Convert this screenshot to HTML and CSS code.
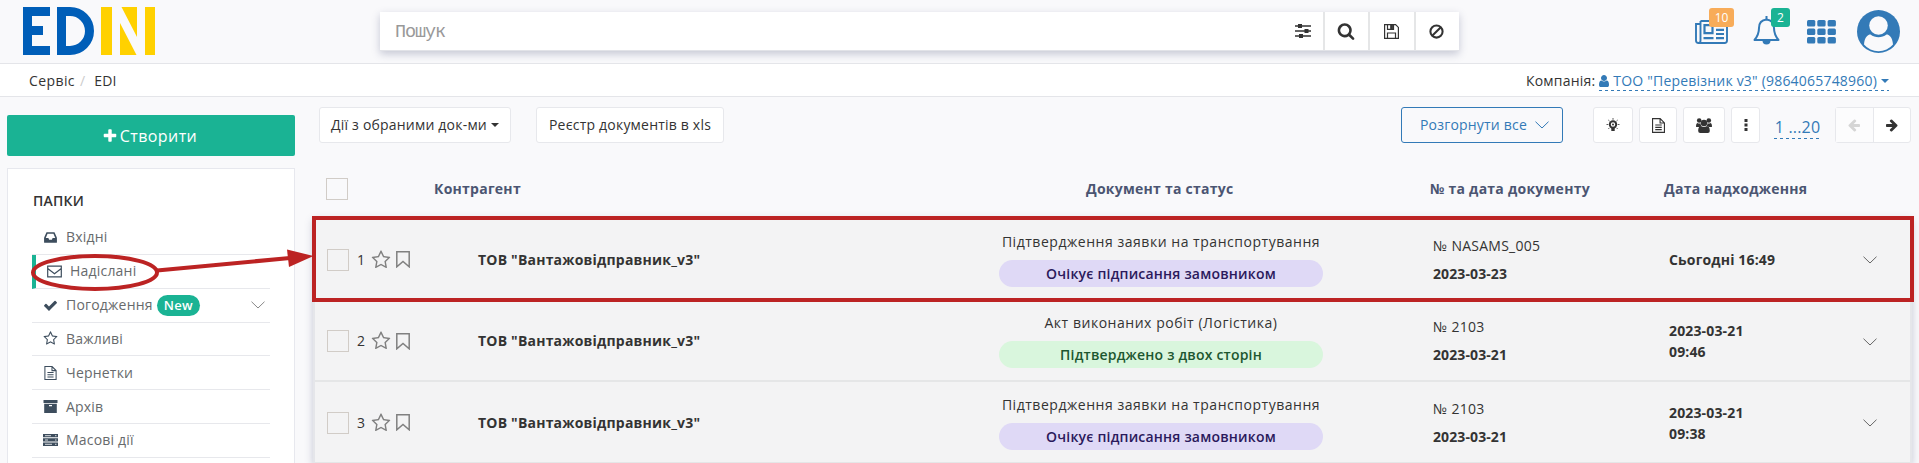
FILE: index.html
```html
<!DOCTYPE html>
<html lang="uk">
<head>
<meta charset="utf-8">
<title>EDIN</title>
<link rel="stylesheet" href="styles.css">
</head>
<body>
<svg class="defs" width="0" height="0">
  <symbol id="plus" viewBox="0 0 1792 1792"><path d="M1600 736v192q0 40-28 68t-68 28h-416v416q0 40-28 68t-68 28h-192q-40 0-68-28t-28-68v-416h-416q-40 0-68-28t-28-68v-192q0-40 28-68t68-28h416v-416q0-40 28-68t68-28h192q40 0 68 28t28 68v416h416q40 0 68 28t28 68z"/></symbol>
  <symbol id="star" viewBox="0 0 1792 1792"><path d="M1201 1004l306-297-422-62-189-382-189 382-422 62 306 297-73 421 378-199 377 199zm527-357q0 22-26 48l-363 354 86 500q1 7 1 20 0 50-41 50-19 0-40-12l-449-236-449 236q-22 12-40 12-21 0-31.500-14.500t-10.500-35.500q0-6 2-20l86-500-364-354q-25-27-25-48 0-37 56-46l502-73 225-455q19-41 49-41t49 41l225 455 502 73q56 9 56 46z"/></symbol>
  <symbol id="inbox" viewBox="0 0 1792 1792"><path d="M1151 960h316q-1-3-2.500-8t-2.500-8l-212-496h-708l-212 496q-1 2-2.500 8t-2.500 8h316l95 192h320zm513 30v482q0 26-19 45t-45 19h-1408q-26 0-45-19t-19-45v-482q0-62 25-123l238-552q10-25 36.500-42t52.500-17h832q26 0 52.500 17t36.500 42l238 552q25 61 25 123z"/></symbol>
  <symbol id="check" viewBox="0 0 1792 1792"><path d="M1671 566q0 40-28 68l-724 724-136 136q-28 28-68 28t-68-28l-136-136-362-362q-28-28-28-68t28-68l136-136q28-28 68-28t68 28l294 295 656-657q28-28 68-28t68 28l136 136q28 28 28 68z"/></symbol>
  <symbol id="search" viewBox="0 0 1792 1792"><path d="M1216 832q0-185-131.500-316.500t-316.500-131.500-316.500 131.500-131.500 316.500 131.500 316.500 316.500 131.500 316.500-131.500 131.500-316.500zm512 832q0 52-38 90t-90 38q-54 0-90-38l-343-342q-179 124-399 124-143 0-273.500-55.500t-225-150-150-225-55.500-273.500 55.500-273.500 150-225 225-150 273.500-55.500 273.500 55.500 225 150 150 225 55.500 273.500q0 220-124 399l343 343q37 37 37 90z"/></symbol>
  <symbol id="user" viewBox="0 0 1792 1792"><path d="M1536 1399q0 109-62.500 187t-150.500 78h-854q-88 0-150.500-78t-62.500-187q0-85 8.500-160.500t31.500-152 58.500-131 94-89 134.500-34.500q131 128 313 128t313-128q76 0 134.500 34.500t94 89 58.500 131 31.500 152 8.500 160.500zm-256-887q0 159-112.500 271.500t-271.500 112.500-271.500-112.500-112.500-271.500 112.500-271.500 271.500-112.500 271.500 112.500 112.500 271.500z"/></symbol>
  <symbol id="right" viewBox="0 0 1792 1792"><path d="M1600 960q0 54-37 91l-651 651q-39 37-91 37-51 0-90-37l-75-75q-38-38-38-91t38-91l293-293h-704q-52 0-84.500-37.500t-32.500-90.500v-128q0-53 32.500-90.500t84.500-37.500h704l-293-294q-38-36-38-90t38-90l75-75q38-38 90-38 53 0 91 38l651 651q37 35 37 90z"/></symbol>
  <symbol id="file" viewBox="0 0 14 16"><path class="line" d="M.6.6h8.200l4.600 4.600v10.200H.6zM8.700.8v4.500h4.600M3.500 7.500h7M3.500 10h7M3.500 12.500h7"/></symbol>
  <symbol id="chevron" viewBox="0 0 14 8"><path d="M.5.7L7 7 13.500.7" fill="none" stroke="currentColor"/></symbol>
  <symbol id="bookmark" viewBox="0 0 14 17"><path d="M.8.8h12.400v15L7 10.500.8 15.800z" fill="none" stroke="currentColor" stroke-width="1.500"/></symbol>
</svg>

<header class="top">
  <svg class="logo" width="132" height="48" viewBox="0 0 132 48">
    <g fill="#005eb8"><rect width="9" height="48"/><rect width="27" height="9"/><rect y="19" width="20" height="9"/><rect y="39" width="27" height="9"/></g>
    <path d="M38.500 4.500H47a19.500 19.500 0 0 1 0 39h-8.500z" fill="none" stroke="#005eb8" stroke-width="9"/>
    <g fill="#ffd100"><rect x="78" width="11" height="48"/><path d="M98.500 0H114v30zM97 16v32h16.500z"/><rect x="122" width="10" height="48"/></g>
  </svg>
  <div class="search">
    <div class="field"><span class="placeholder">Пошук</span>
      <svg width="16" height="14" viewBox="0 0 16 14"><path d="M0 2h16M0 7h16M0 12h16" stroke="#333" stroke-width="1.300"/><path d="M3 0h4v4H3zM9.500 5h4v4h-4zM4 10h4v4H4z"/></svg>
    </div>
    <div class="sbtn"><svg width="18" height="18"><use href="#search"/></svg></div>
    <div class="sbtn"><svg width="15" height="15" viewBox="0 0 15 15" fill="none" stroke="#333" stroke-width="1.200"><path d="M.6.6h11l2.800 2.800v11H.6zM3.500 14V9h8v5M3.500.8v4.500h6V.8"/><path d="M6.800 1h1.500v3.300H6.800z" fill="#333"/></svg></div>
    <div class="sbtn"><svg width="15" height="15" viewBox="0 0 16 16" fill="none" stroke="#333" stroke-width="2.200"><circle cx="8" cy="8" r="6.500"/><path d="M3.700 12.300l8.600-8.600"/></svg></div>
  </div>
  <div class="tools">
    <div class="news"><svg width="33" height="24" viewBox="0 0 33 24" fill="none" stroke="currentColor" stroke-width="1.900"><path d="M5.500 1h26.500v19.500q0 2.500-2.500 2.500h-26q-2.500 0-2.500-2.500V4h4.500M5.500 1v19.500q0 2.500-2 2.500"/><path d="M9.500 5.200h8v8h-8zM8.500 18.200h10M21 9.800h8M21 14h8M21 18.200h8" stroke-width="2.200"/></svg><span class="count orange">10</span></div>
    <div class="bell"><svg width="27" height="29" viewBox="0 0 27 29" fill="none" stroke="currentColor" stroke-width="2"><path d="M13.500 3.500C8 4 6 8 6 12c0 6-2 9-4.500 12h24C23 21 21 18 21 12c0-4-2-8-7.500-8.500z" stroke-linejoin="round"/><path d="M13.500 0v4"/><path d="M9.500 24.500a4 4 0 0 0 8 0z" fill="currentColor" stroke="none"/></svg><span class="count green">2</span></div>
    <svg class="apps" width="29" height="24" viewBox="0 0 29 24"><g id="r"><rect width="8.300" height="6.500" rx="1.500"/><rect x="10.300" width="8.300" height="6.500" rx="1.500"/><rect x="20.600" width="8.300" height="6.500" rx="1.500"/></g><use href="#r" y="8.500"/><use href="#r" y="17"/></svg>
    <svg class="avatar" width="43" height="43" viewBox="0 0 43 43"><circle cx="21.500" cy="21.500" r="21.500"/><circle cx="21.500" cy="15.500" r="9.300" fill="#f9f9fb"/><path d="M7 34.500C7.500 27 11 24.500 13.500 24.500c4.500 3.500 11.500 3.500 16 0 2.500 0 6 2.500 6.500 10a19 19 0 0 1-29 0z" fill="#f9f9fb"/></svg>
  </div>
</header>

<nav class="crumbs">
  <span>Сервіс</span><span class="slash">/</span><span>EDI</span>
  <div class="company"><span>Компанія:</span><a><svg width="14" height="14"><use href="#user"/></svg><span>ТОО "Перевізник v3" (9864065748960)</span><i class="caret"></i></a></div>
</nav>

<div class="body">
  <aside>
    <div class="create"><svg width="16" height="16"><use href="#plus"/></svg>Створити</div>
    <div class="panel">
      <h2>ПАПКИ</h2>
      <ul>
        <li><svg width="15" height="15"><use href="#inbox"/></svg>Вхідні</li>
        <li class="active"><svg width="15" height="13" viewBox="0 0 15 13"><path class="line" d="M.7 1.200h13.600v10.600H.7zM.7 3.500l6.800 5.200 6.800-5.200"/></svg>Надіслані</li>
        <li><svg width="15" height="15"><use href="#check"/></svg>Погодження<b class="new">New</b><svg class="chev" width="14" height="8"><use href="#chevron"/></svg></li>
        <li><svg width="15" height="15"><use href="#star"/></svg>Важливі</li>
        <li><svg width="15" height="14"><use href="#file"/></svg>Чернетки</li>
        <li><svg width="15" height="13" viewBox="0 0 15 13"><path d="M.5 0h14v3H.5zM1.200 3.800h12.600V13H1.200zM6 5v1.200h3V5z" fill-rule="evenodd"/></svg>Архів</li>
        <li><svg width="15" height="12" viewBox="0 0 15 12"><path d="M0 0h15v3.300H0zM0 4.300h15v3.300H0zM0 8.600h15V12H0z"/><path d="M2 1.700h6M2 6h3M2 10.300h7M12 1.700h1.500M12 6h1.500M12 10.300h1.500" stroke="#fff" stroke-width=".8"/></svg>Масові дії</li>
      </ul>
    </div>
  </aside>

  <main>
    <div class="toolbar">
      <div class="btn wide1">Дії з обраними док-ми<i class="caret"></i></div>
      <div class="btn wide2">Реєстр документів в xls</div>
      <div class="btn expand">Розгорнути все<svg width="14" height="8"><use href="#chevron"/></svg></div>
      <div class="btn b1"><svg width="14" height="14" viewBox="0 0 14 14"><circle cx="7" cy="6.500" r="3.200" fill="none" stroke="#333" stroke-width="2"/><circle cx="7" cy="6.500" r="1"/><path d="M5.300 10h3.400v3H5.300z"/><path d="M7 0v1.800M.5 6.500h1.800M11.700 6.500h1.800M2.300 2l1.300 1.200M11.700 2l-1.300 1.200M2.300 11l1.200-1.200M11.700 11l-1.200-1.200" stroke="#333" stroke-width=".8"/></svg></div>
      <div class="btn b2"><svg width="13" height="15"><use href="#file"/></svg></div>
      <div class="btn b3"><svg width="16" height="15" viewBox="0 0 16 15"><circle cx="3.200" cy="2.500" r="2.300"/><circle cx="12.800" cy="2.500" r="2.300"/><circle cx="8" cy="5" r="3.200"/><path d="M0 8.500C0 5.500 1 5 1.500 5q1.700 1 3 .3Q4.500 7 5.500 8 4 8 3.300 9H1Q0 9 0 8.500zM16 8.500c0-3-1-3.500-1.500-3.500q-1.700 1-3 .3 0 1.700-1 2.700 1.500 0 2.200 1H15q1 0 1-.5zM2.200 13c0-4 1.500-5 3-5q2.800 2 5.600 0c1.500 0 3 1 3 5q0 2-2 2H4.200q-2 0-2-2z"/></svg></div>
      <div class="btn b4"><svg width="4" height="12" viewBox="0 0 4 12"><path d="M.5 0h3v3h-3zM.5 4.500h3v3h-3zM.5 9h3v3h-3z"/></svg></div>
      <a class="range">1 ...20</a>
      <div class="pager"><span class="off"><svg class="flip" width="14" height="14"><use href="#right"/></svg></span><span><svg width="14" height="14"><use href="#right"/></svg></span></div>
    </div>

    <div class="thead">
      <i class="box"></i><span>Контрагент</span><span class="mid">Документ та статус</span><span>№ та дата документу</span><span>Дата надходження</span>
    </div>

    <div class="rows">
      <div class="row">
        <div class="marks"><i class="box"></i><span>1</span><svg width="20" height="20"><use href="#star"/></svg><svg width="14" height="17"><use href="#bookmark"/></svg></div>
        <b>ТОВ "Вантажовідправник_v3"</b>
        <div class="status"><span class="doc">Підтвердження заявки на транспортування</span><span class="pill">Очікує підписання замовником</span></div>
        <div class="num"><span>№ NASAMS_005</span><b>2023-03-23</b></div>
        <b class="date">Сьогодні 16:49</b>
        <svg width="14" height="8"><use href="#chevron"/></svg>
      </div>
      <div class="row">
        <div class="marks"><i class="box"></i><span>2</span><svg width="20" height="20"><use href="#star"/></svg><svg width="14" height="17"><use href="#bookmark"/></svg></div>
        <b>ТОВ "Вантажовідправник_v3"</b>
        <div class="status"><span class="doc">Акт виконаних робіт (Логістика)</span><span class="pill done">Підтверджено з двох сторін</span></div>
        <div class="num"><span>№ 2103</span><b>2023-03-21</b></div>
        <b class="date">2023-03-21<br>09:46</b>
        <svg width="14" height="8"><use href="#chevron"/></svg>
      </div>
      <div class="row">
        <div class="marks"><i class="box"></i><span>3</span><svg width="20" height="20"><use href="#star"/></svg><svg width="14" height="17"><use href="#bookmark"/></svg></div>
        <b>ТОВ "Вантажовідправник_v3"</b>
        <div class="status"><span class="doc">Підтвердження заявки на транспортування</span><span class="pill">Очікує підписання замовником</span></div>
        <div class="num"><span>№ 2103</span><b>2023-03-21</b></div>
        <b class="date">2023-03-21<br>09:38</b>
        <svg width="14" height="8"><use href="#chevron"/></svg>
      </div>
    </div>
  </main>
</div>

<!-- Annotations: selected folder and the document it leads to -->
<svg class="notes" width="1919" height="463" viewBox="0 0 1919 463" fill="none" stroke="#bc2323" stroke-width="4">
  <ellipse cx="95" cy="272.500" rx="62" ry="16.500"/>
  <path d="M157 270.500L290 258"/>
  <path d="M287 249.500L313.500 256 289 267z" fill="#bc2323" stroke="none"/>
  <rect x="314" y="218" width="1598" height="82"/>
</svg>
</body>
</html>
```
FILE: styles.css
```css
* { box-sizing: border-box; }
body {
  margin: 0; height: 463px; overflow: hidden; position: relative;
  background: #f9f9fb; color: #333; letter-spacing: .2px;
  font: 14px/20px "Open Sans", "Noto Sans", sans-serif;
}
svg { display: block; flex: none; }
svg:not([fill]) { fill: currentColor; }
.defs { position: absolute; }
.line { fill: none; stroke: currentColor; stroke-width: 1.2; }
b { font-weight: 600; }

.top { height: 64px; display: flex; border-bottom: 1px solid #e4e5e9; }
.logo { margin: 7px 0 0 23px; }
.search {
  margin: 12px 0 0 225px; width: 1079px; height: 39px; display: flex;
  background: #fff; border-bottom: 1px solid #e2e3e8;
  box-shadow: 0 3px 8px rgba(60, 65, 110, .27);
}
.field { flex: 1; display: flex; align-items: center; justify-content: space-between; padding: 0 12px 0 15px; }
.placeholder { padding-top: 3px; font: 18.5px/24px "Liberation Mono", monospace; letter-spacing: -1.1px; color: #999; }
.sbtn { width: 45.3px; padding-right: 2px; border-left: 2px solid #e5e6e7; display: flex; align-items: center; justify-content: center; }
.tools { display: flex; color: #337ab7; margin-left: 236px; }
.news { position: relative; margin-top: 20px; width: 58px; }
.bell { position: relative; margin-top: 16px; width: 54px; }
.apps { margin-top: 20px; }
.avatar { margin: 10px 0 0 21px; }
.count {
  position: absolute; height: 19px; border-radius: 3px; color: #fff;
  font-size: 12px; line-height: 19px; font-weight: 500; text-align: center; letter-spacing: 0;
}
.orange { background: #f8ac59; width: 25px; left: 14px; top: -12px; }
.green { background: #1ab394; width: 19px; left: 18px; top: -8px; }

.crumbs { height: 33px; background: #fff; border-bottom: 1px solid #e4e5e9; display: flex; padding: 7px 30px 0 29px; }
.crumbs > span:first-child { letter-spacing: .4px; }
.slash { color: #ccc; margin: 0 9px 0 5px; }
.company { margin-left: auto; display: flex; gap: 4px; }
.company a {
  display: flex; align-items: center; color: #337ab7; height: 20px;
  background: repeating-linear-gradient(90deg, #337ab7 0 3px, transparent 3px 6px) 0 100% / 100% 1px no-repeat;
}
.company a svg { margin: 0 2px 0 -2px; }
.caret { border: 4.5px solid transparent; border-top-color: currentColor; border-bottom: 0; margin-left: 4px; }

.body { display: flex; height: 366px; overflow: hidden; }
aside { width: 288px; margin: 18px 0 0 7px; }
.create {
  height: 41px; border-radius: 2px; background: #1ab394; color: #fff;
  font-size: 16px; letter-spacing: .4px; padding-right: 3px;
  display: flex; align-items: center; justify-content: center; gap: 2px;
}
.panel { margin-top: 12px; height: 295px; overflow: hidden; border: 1px solid #e7e8ee; border-bottom: 0; background: #fff; padding: 22px 24px 0; }
h2 { margin: 0 0 10px 1px; font-size: 14px; line-height: 20px; font-weight: 600; }
ul { list-style: none; margin: 0; padding: 0; }
li {
  height: 33.85px; padding-left: 11px; border-bottom: 1px solid #e7e8ec;
  display: flex; align-items: center; color: #676a6c;
}
li svg:first-child { color: #3d4d5d; margin-right: 8px; }
.active { border-left: 4px solid #1ab394; }
.new {
  height: 21px; width: 43px; margin-left: 4px; border-radius: 11px; background: #1ab394;
  color: #fff; text-align: center; font-size: 13px; line-height: 21px;
}
.chev { margin: 0 5px 0 auto; color: #888; }

main { margin-left: 18px; width: 1599px; }
.toolbar { display: flex; height: 36px; margin: 10px 0 0 6px; }
.btn {
  border: 1px solid #e7e8ec; border-radius: 3px; background: #fff;
  display: flex; align-items: center; justify-content: center;
}
.wide1 { width: 192px; }
.wide2 { width: 188px; margin-left: 25px; }
.expand { width: 162px; margin: 0 30px 0 677px; padding-left: 5px; border-color: #337ab7; color: #337ab7; background: transparent; gap: 8px; }
.b1 { width: 40px; }
.b2 { width: 38px; margin-left: 6px; }
.b3 { width: 42px; margin-left: 6px; }
.b4 { width: 29px; margin-left: 6px; }
.range {
  margin: 7px 14px 0; width: 47px; height: 25px; text-align: center; color: #337ab7;
  font-size: 16px; line-height: 26px; white-space: nowrap;
  background: repeating-linear-gradient(90deg, #337ab7 0 3px, transparent 3px 6px) 0 100% / 100% 1px no-repeat;
}
.pager { display: flex; width: 76px; border: 1px solid #e7e8ec; border-radius: 3px; background: #fff; }
.pager span { flex: 1; display: flex; align-items: center; justify-content: center; }
.pager .off { color: #d5d5d5; border-right: 1px solid #e7e8ec; background: #fcfcfd; }
.flip { transform: scaleX(-1); }

.thead {
  display: grid; grid-template-columns: 108px 543px 453px 234px 1fr; align-items: center;
  margin-left: 13px; height: 74px; padding-top: 17px;
  font-weight: 700; color: #4b5572; letter-spacing: .25px;
}
.thead .mid { padding-left: 109px; }
.box { width: 22px; height: 22px; border: 1px solid #d1ccc7; flex: none; }

.rows { border: 2px solid #e5e6ea; border-bottom: 0; box-shadow: 0 3px 8px rgba(60, 65, 110, .27); height: 246px; background: #f3f3f4; }
.row {
  height: 81.6px; padding: 2px 0 0 12px; border-bottom: 2px solid #e5e6e7;
  display: grid; align-items: center;
  grid-template-columns: 151px 521px 434px 236px 194px 1fr;
}
.row > svg { color: #666; margin-top: 1px; }
.marks { display: flex; align-items: center; }
.marks span { margin: 0 6px 0 8px; }
.marks svg { color: #808080; }
.marks svg + svg { margin-left: 5px; }
.status { width: 324px; display: flex; flex-direction: column; gap: 8px; align-items: center; }
.doc { font-weight: 500; letter-spacing: .53px; margin-top: -1px; white-space: nowrap; }
.pill { width: 324px; height: 27px; line-height: 27px; border-radius: 14px; text-align: center; background: #dfd9f6; color: #2b1a5c; font-weight: 600; }
.done { background: #d9f6dd; color: #1d5730; }
.num { display: flex; flex-direction: column; gap: 8px; font-weight: 500; letter-spacing: .1px; }
.num span { letter-spacing: .25px; }
.date { line-height: 21px; letter-spacing: .15px; }
.row b { font-weight: 700; }

.notes { position: absolute; left: 0; top: 0; pointer-events: none; }
```
